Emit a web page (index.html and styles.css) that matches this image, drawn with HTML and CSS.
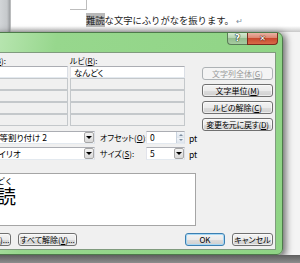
FILE: index.html
```html
<!DOCTYPE html>
<html lang="ja">
<head>
<meta charset="utf-8">
<title>ルビ</title>
<link rel="stylesheet" href="styles.css">
</head>
<body>
<div class="screen">
  <div class="doc">
    <div class="doc-side"></div>
    <div class="doc-page">
      <div class="corner"></div>
      <p class="doc-line"><span class="sel">難読</span>な文字にふりがなを振ります。<span class="para">↵</span></p>
    </div>
  </div>
  <div class="stage">
    <div class="dialog">
      <div class="titlebar">
        <span class="cap cap-help">?</span><span class="cap cap-close">✕</span>
      </div>
      <div class="client">
        <div class="top">
          <div class="fields">
            <div class="labels">
              <span class="lbl">対象文字列(<u>B</u>):</span>
              <span class="lbl">ルビ(<u>R</u>):</span>
            </div>
            <div class="grid">
              <div class="tb tb-on">難読</div><div class="tb tb-on">なんどく</div>
              <div class="tb"></div><div class="tb"></div>
              <div class="tb"></div><div class="tb"></div>
              <div class="tb"></div><div class="tb"></div>
              <div class="tb"></div><div class="tb"></div>
            </div>
          </div>
          <div class="side-btns">
            <span class="btn btn-dis">文字列全体(<u>G</u>)</span>
            <span class="btn">文字単位(<u>M</u>)</span>
            <span class="btn">ルビの解除(<u>C</u>)</span>
            <span class="btn btn-tight">変更を元に戻す(<u>D</u>)</span>
          </div>
        </div>
        <div class="opts">
          <div class="opt-row">
            <span class="olbl olbl-a">配置(<u>L</u>):</span>
            <div class="combo"><span class="combo-text">均等割り付け 2</span><span class="drop"></span></div>
            <span class="olbl olbl-b">オフセット(<u>O</u>):</span>
            <div class="num"><span class="combo-text">0</span><span class="spin"><span class="spin-up"></span><span class="spin-down"></span></span></div>
            <span class="unit">pt</span>
          </div>
          <div class="opt-row">
            <span class="olbl olbl-a">フォント(<u>F</u>):</span>
            <div class="combo"><span class="combo-text">メイリオ</span><span class="drop"></span></div>
            <span class="olbl olbl-b">サイズ(<u>S</u>):</span>
            <div class="num"><span class="combo-text">5</span><span class="drop"></span></div>
            <span class="unit">pt</span>
          </div>
        </div>
        <div class="preview">
          <span class="rb"><span class="rt">なんどく</span><span class="rbase">難読</span></span>
        </div>
        <div class="footer">
          <span class="btn w58">すべて適用(<u>A</u>)...</span>
          <span class="btn w59">すべて解除(<u>V</u>)...</span>
          <span class="spacer"></span>
          <span class="btn btn-ok w40">OK</span>
          <span class="btn w41">キャンセル</span>
        </div>
      </div>
    </div>
  </div>
  <div class="bottom"></div>
</div>
</body>
</html>
```
FILE: styles.css
```css
* { box-sizing: border-box; margin: 0; padding: 0; }
html, body { width: 300px; height: 263px; overflow: hidden; }
body { background: #fff; font-family: "Noto Sans CJK JP", "Noto Sans", sans-serif; color: #000; }
u { text-decoration: underline; text-underline-offset: 1px; }

.screen { width: 300px; height: 263px; display: flex; flex-direction: column; overflow: hidden; }

.doc { height: 32px; flex: none; display: flex; }
.doc-side { width: 11px; background: linear-gradient(to right, #d2d5d8 0, #c6c9cc 7px, #9c9fa2 10px, #d8d8d8 11px); }
.doc-page { flex: 1; background: linear-gradient(to bottom, #fff 0, #fff 26px, #c8c8c8 32px); }
.corner { margin-left: 59px; width: 17px; height: 10px; border-right: 1px solid #bdbdbd; border-bottom: 1px solid #bdbdbd; }
.doc-line { margin: 2px 0 0 75px; font-size: 9.3px; line-height: 16px; white-space: nowrap; color: #222; }
.sel { background: #b9b9b9; }
.para { color: #7d8da0; font-size: 8px; margin-left: 2px; }

.stage { height: 223px; flex: none; display: flex; background: #f4f4f4; }
.dialog {
  flex: none; width: 339px; height: 223px; margin-left: -56px;
  display: flex; flex-direction: column;
  border: 1px solid #4d7a4a; border-radius: 0 6px 6px 0;
  padding: 0 6px 4px;
  background: linear-gradient(100deg, #a2db9a 0, #bce7b5 12%, #97d78d 30%, #8fd485 100%);
  box-shadow: 2px 2px 7px 1px rgba(0, 0, 0, .55);
}
.titlebar { height: 19px; flex: none; display: flex; justify-content: flex-end; align-items: flex-start; margin: 0 -6px; padding-right: 4px; }
.cap { height: 12px; display: flex; align-items: center; justify-content: center; color: #fff; font: bold 9px/1 "DejaVu Sans", sans-serif; }
.cap-help {
  width: 20px; border: 1px solid #5b7c58; border-top: none; border-right: none; border-radius: 0 0 0 4px;
  background: linear-gradient(#d5e9d2 0, #b4d3af 45%, #95bd8f 50%, #a6cba0 100%);
  text-shadow: 0 0 1px #1e321d, 0 0 1px #1e321d, 0 0 1px #1e321d;
}
.cap-close {
  width: 31px; border: 1px solid #7b2c1f; border-top: none; border-radius: 0 0 4px 0;
  background: linear-gradient(#eab3a5 0, #dc8670 45%, #c84a2f 50%, #d86a48 100%);
  text-shadow: 0 0 1px #4a140c, 0 0 1px #4a140c, 0 0 1px #4a140c; font-size: 8px;
}

.client {
  flex: 1; background: #f0f0f0; border: 1px solid #809b7e;
  display: flex; flex-direction: column; padding: 0 2px 3px 1px;
  font-size: 8px; font-feature-settings: "palt";
}

.top { height: 78px; flex: none; display: flex; }
.fields { width: 232px; padding-top: 3px; }
.labels { display: grid; grid-template-columns: 115px 115px; column-gap: 2px; height: 10px; line-height: 10px; }
.lbl { white-space: nowrap; }
.grid { display: grid; grid-template-columns: 115px 115px; grid-auto-rows: 12px; column-gap: 2px; }
.tb { border: 1px solid #c4c8cb; background: #f0f0f0; line-height: 10px; padding-left: 3px; font-size: 8.5px; white-space: nowrap; }
.tb-on { background: #fff; border-color: #abadb3 #dbdfe6 #e3e9ef #e2e3ea; }

.side-btns { margin-left: 17px; width: 71px; padding-top: 14px; display: flex; flex-direction: column; gap: 4px; }
.btn {
  height: 13px; flex: none; display: flex; align-items: center; justify-content: center;
  border: 1px solid #707070; border-radius: 3px;
  background: linear-gradient(#f3f3f3 0, #ebebeb 50%, #dddddd 51%, #cfcfcf 100%);
  box-shadow: inset 0 0 0 1px rgba(255, 255, 255, .6);
  font-size: 8px; line-height: 11px; white-space: nowrap; overflow: hidden;
}
.btn-tight { letter-spacing: -0.3px; }
.btn-dis { border-color: #adb2b5; background: #f4f4f4; color: #9a9a9a; box-shadow: none; }
.btn-ok { border-color: #3c7fb1; box-shadow: inset 0 0 0 1px #a6d8f5; }
.w58 { width: 58px; }
.w59 { width: 59px; }
.w40 { width: 40px; }
.w41 { width: 41px; }

.opts { flex: none; display: flex; flex-direction: column; gap: 3px; }
.opt-row { height: 13px; display: flex; align-items: center; }
.olbl { white-space: nowrap; line-height: 13px; }
.olbl-a { width: 34px; }
.olbl-b { width: 46px; margin-left: 5px; }
.combo, .num {
  height: 13px; display: flex; background: #fff; border: 1px solid;
  border-color: #abadb3 #dbdfe6 #e3e9ef #e2e3ea;
}
.combo { width: 108px; }
.num { width: 39px; }
.combo-text { flex: 1; padding-left: 3px; line-height: 11px; font-size: 8.5px; white-space: nowrap; overflow: hidden; }
.drop {
  width: 10px; flex: none; display: flex; align-items: center; justify-content: center;
  background: linear-gradient(#f4f4f4, #d8d8d8); border: 1px solid #a7a7a7; border-radius: 2px;
}
.drop::after { content: ""; border-left: 3px solid transparent; border-right: 3px solid transparent; border-top: 3px solid #000; }
.spin { width: 8px; flex: none; display: flex; flex-direction: column; border-left: 1px solid #c9d3de; }
.spin-up, .spin-down { flex: 1; display: flex; align-items: center; justify-content: center; background: linear-gradient(#f3f6fa, #dde4ec); }
.spin-up::after { content: ""; border-left: 2px solid transparent; border-right: 2px solid transparent; border-bottom: 2px solid #7d8da0; }
.spin-down::after { content: ""; border-left: 2px solid transparent; border-right: 2px solid transparent; border-top: 2px solid #7d8da0; }
.unit { margin-left: 4px; font-size: 8.5px; }

.preview { flex: none; margin-top: 13px; width: 243px; height: 53px; background: #fff; border: 1px solid #a5a5a5; padding: 1px 0 0 24px; }
.rb { display: inline-flex; flex-direction: column; align-items: center; }
.rt { font-size: 8px; line-height: 9px; white-space: nowrap; font-feature-settings: normal; }
.rbase { font-size: 19px; line-height: 22px; white-space: nowrap; }

.footer { flex: none; margin-top: 7px; height: 13px; display: flex; gap: 7px; }
.spacer { flex: 1; }

.bottom { height: 8px; flex: none; background: linear-gradient(#5e5e5e, #8d8d8d); }
```
